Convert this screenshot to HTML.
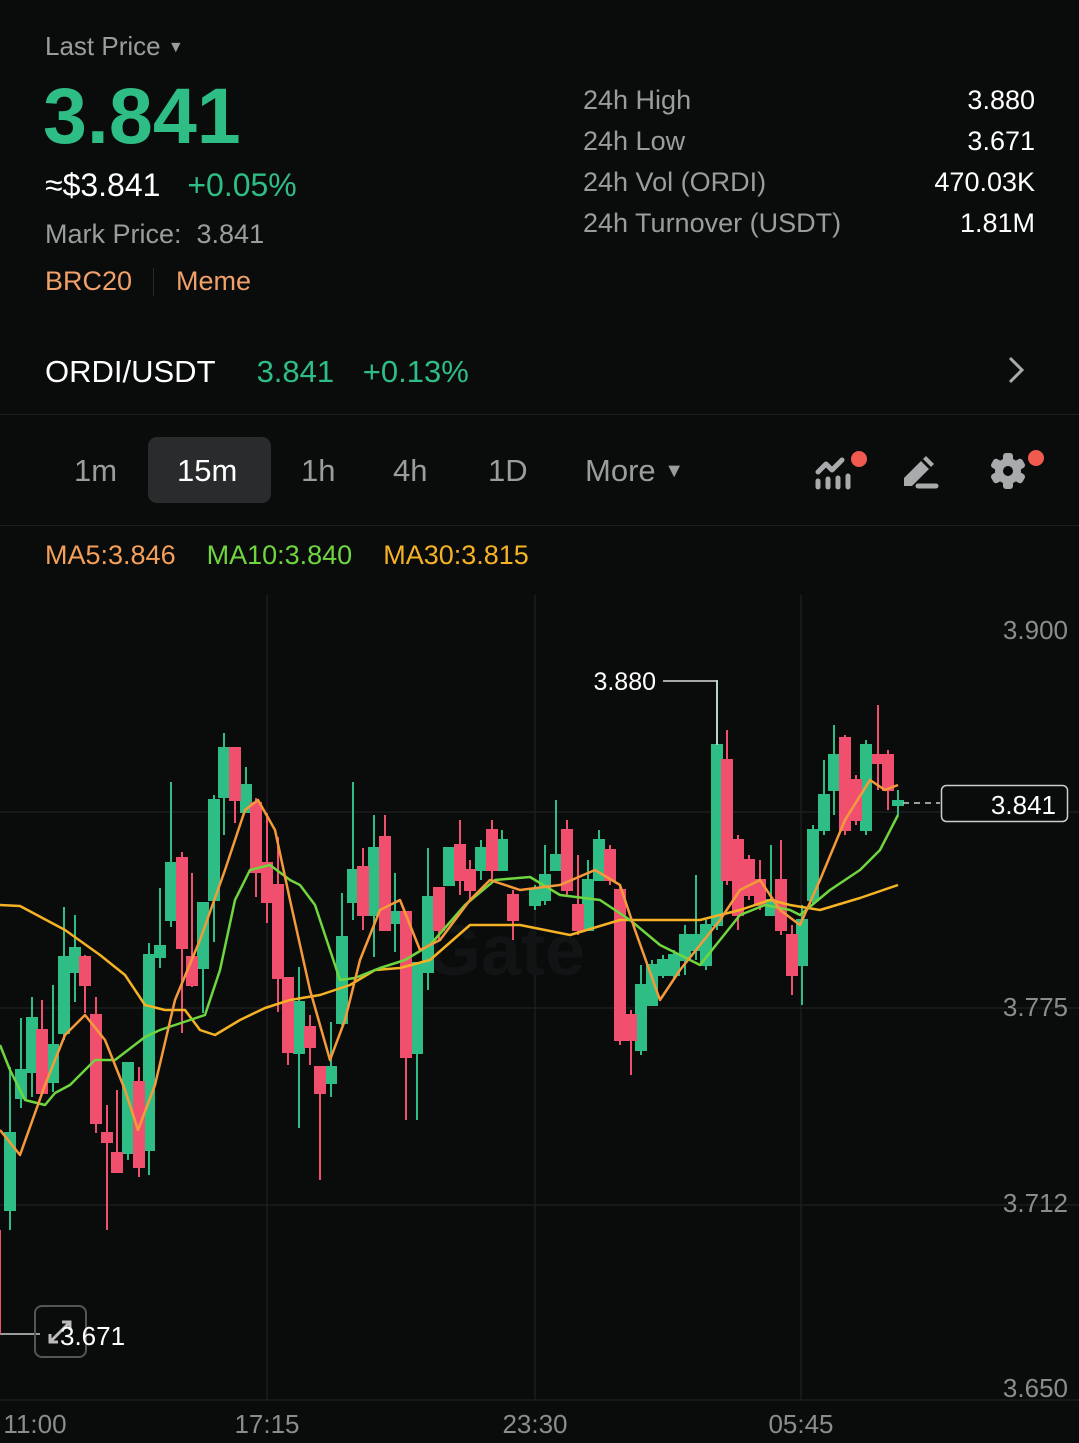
<!DOCTYPE html>
<html><head><meta charset="utf-8"><style>
*{margin:0;padding:0;box-sizing:border-box}
body{width:1079px;height:1443px;background:#0a0b0b;font-family:"Liberation Sans",sans-serif;position:relative;overflow:hidden;color:#fff}
.a{position:absolute;white-space:nowrap}
.g{color:#9a9c9e}
.gr{color:#2ebd85}
</style></head><body>
<div class="a g" style="left:45px;top:31px;font-size:26px">Last Price <span style="font-size:16px;position:relative;top:-3px">▼</span></div>
<div class="a gr" style="left:43px;top:70px;font-size:79px;font-weight:bold;letter-spacing:0px">3.841</div>
<div class="a" style="left:45px;top:167px;font-size:32px">≈$3.841 <span class="gr" style="margin-left:18px">+0.05%</span></div>
<div class="a g" style="left:45px;top:219px;font-size:27px">Mark Price:&nbsp; 3.841</div>
<div class="a" style="left:45px;top:266px;font-size:27px;color:#f0a06a">BRC20</div>
<div class="a" style="left:153px;top:268px;width:1px;height:28px;background:#2a2a2a"></div>
<div class="a" style="left:176px;top:266px;font-size:27px;color:#f0a06a">Meme</div>
<div class="a g" style="left:583px;top:80px;font-size:27px;line-height:41px">24h High<br>24h Low<br>24h Vol (ORDI)<br>24h Turnover (USDT)</div>
<div class="a" style="right:44px;top:80px;font-size:27px;line-height:41px;text-align:right">3.880<br>3.671<br>470.03K<br>1.81M</div>
<div class="a" style="left:45px;top:354px;font-size:31px">ORDI/USDT <span class="gr" style="margin-left:33px">3.841</span> <span class="gr" style="margin-left:20px">+0.13%</span></div>
<svg class="a" style="left:1006px;top:356px" width="20" height="28"><path d="M4 2 L16 14 L4 26" stroke="#aaa" stroke-width="3" fill="none"/></svg>
<div class="a" style="left:0;top:414px;width:1079px;height:1px;background:#1e1f20"></div>
<div class="a" style="left:148px;top:437px;width:123px;height:66px;background:#2a2b2c;border-radius:9px"></div>
<div class="a g" style="left:74px;top:453px;font-size:31px">1m</div>
<div class="a" style="left:177px;top:453px;font-size:31px">15m</div>
<div class="a g" style="left:301px;top:453px;font-size:31px">1h</div>
<div class="a g" style="left:393px;top:453px;font-size:31px">4h</div>
<div class="a g" style="left:488px;top:453px;font-size:31px">1D</div>
<div class="a g" style="left:585px;top:453px;font-size:31px">More <span style="font-size:20px;position:relative;top:-4px">▼</span></div>
<svg class="a" style="left:810px;top:448px" width="60" height="44">
<path d="M8 24 L16 16 L22 22 L32 12" stroke="#a8aaac" stroke-width="5" fill="none" stroke-linecap="round" stroke-linejoin="round"/>
<path d="M8 33V39M18 31V39M28 30V39M38 28V39" stroke="#a8aaac" stroke-width="5" stroke-linecap="round"/>
<circle cx="49" cy="11" r="8" fill="#f05a4f"/></svg>
<svg class="a" style="left:898px;top:450px" width="44" height="40">
<path d="M6 36 L6 28 L28 6 L36 14 L14 36Z" fill="#a8aaac"/><path d="M20 36 H38" stroke="#a8aaac" stroke-width="5" stroke-linecap="round"/><path d="M24 10 L32 18" stroke="#0a0b0b" stroke-width="3"/></svg>
<svg class="a" style="left:988px;top:446px" width="60" height="46">
<g transform="translate(20,25)" fill="#a8aaac"><circle r="13"/><rect x="-5" y="-18" width="10" height="36" rx="3"/><rect x="-5" y="-18" width="10" height="36" rx="3" transform="rotate(60)"/><rect x="-5" y="-18" width="10" height="36" rx="3" transform="rotate(120)"/><circle r="5" fill="#0a0b0b"/></g>
<circle cx="48" cy="12" r="8" fill="#f05a4f"/></svg>
<div class="a" style="left:0;top:525px;width:1079px;height:1px;background:#1e1f20"></div>
<div class="a" style="left:45px;top:540px;font-size:27px"><span style="color:#f5a05a">MA5:3.846</span><span style="color:#6fd640;margin-left:31px">MA10:3.840</span><span style="color:#f5b225;margin-left:31px">MA30:3.815</span></div>

<svg class="a" style="left:0;top:0" width="1079" height="1443">
<g stroke="#1c1d1e" stroke-width="1.5">
<path d="M267 595V1400M535 595V1400M801 595V1400M0 812H1079M0 1008H1079M0 1205H1079M0 1400H1079"/>
</g>
<text x="425" y="975" font-size="72" font-weight="bold" fill="#121314" font-family="Liberation Sans">Gate</text>
<g font-size="26" fill="#8a8c8e" font-family="Liberation Sans" text-anchor="end">
<text x="1068" y="639">3.900</text><text x="1068" y="1016">3.775</text><text x="1068" y="1212">3.712</text><text x="1068" y="1397">3.650</text></g>
<g font-size="26" fill="#8a8c8e" font-family="Liberation Sans" text-anchor="middle">
<text x="35" y="1433">11:00</text><text x="267" y="1433">17:15</text><text x="535" y="1433">23:30</text><text x="801" y="1433">05:45</text></g>
<g stroke-width="2">
<g stroke="#2ebd85" fill="#2ebd85">
<path d="M10 1067V1230M21 1018V1108M32 997V1097M53 985V1092M64 907V1040M75 915V1002M128 1063V1160M149 943V1175M160 888V968M171 782V927M203 903V1013M214 795V942M224 733V835M246 767V812M299 967V1128M331 1022V1097M342 893V1025M353 782V920M374 815V957M395 873V952M417 963V1120M428 848V990M449 848V885M481 840V880M502 830V870M535 885V910M545 845V905M556 800V870M588 860V930M599 830V880M641 965V1055M652 960V1005M663 955V978M674 950V978M685 925V975M696 875V960M706 920V970M717 680V930M771 845V915M802 905V1005M813 825V905M824 760V835M834 725V815M866 740V835M898 790V815"/>
<rect x="5" y="1133" width="10" height="77"/><rect x="16" y="1070" width="10" height="28"/><rect x="27" y="1018" width="10" height="54"/><rect x="48" y="1045" width="10" height="37"/><rect x="59" y="957" width="10" height="76"/><rect x="70" y="948" width="10" height="24"/><rect x="123" y="1063" width="10" height="90"/><rect x="144" y="955" width="10" height="195"/><rect x="155" y="946" width="10" height="11"/><rect x="166" y="863" width="10" height="57"/><rect x="198" y="903" width="10" height="65"/><rect x="209" y="800" width="10" height="100"/><rect x="219" y="748" width="10" height="49"/><rect x="241" y="785" width="10" height="27"/><rect x="294" y="1002" width="10" height="51"/><rect x="326" y="1067" width="10" height="16"/><rect x="337" y="937" width="10" height="86"/><rect x="348" y="870" width="10" height="32"/><rect x="369" y="848" width="10" height="67"/><rect x="390" y="912" width="10" height="11"/><rect x="412" y="963" width="10" height="90"/><rect x="423" y="897" width="10" height="75"/><rect x="444" y="848" width="10" height="37"/><rect x="476" y="848" width="10" height="22"/><rect x="497" y="840" width="10" height="30"/><rect x="530" y="890" width="10" height="15"/><rect x="540" y="875" width="10" height="25"/><rect x="551" y="855" width="10" height="15"/><rect x="583" y="880" width="10" height="50"/><rect x="594" y="840" width="10" height="40"/><rect x="636" y="985" width="10" height="65"/><rect x="647" y="965" width="10" height="40"/><rect x="658" y="960" width="10" height="15"/><rect x="669" y="955" width="10" height="20"/><rect x="680" y="935" width="10" height="25"/><rect x="691" y="935" width="10" height="15"/><rect x="701" y="925" width="10" height="40"/><rect x="712" y="745" width="10" height="180"/><rect x="766" y="900" width="10" height="15"/><rect x="797" y="920" width="10" height="45"/><rect x="808" y="830" width="10" height="70"/><rect x="819" y="795" width="10" height="35"/><rect x="829" y="755" width="10" height="35"/><rect x="861" y="745" width="10" height="85"/><rect x="893" y="801" width="10" height="4"/>
</g>
<g stroke="#f0506e" fill="#f0506e">
<path d="M42 1000V1095M85 955V1013M96 997V1133M107 1105V1230M117 1090V1172M139 1067V1177M182 852V1033M192 873V987M235 748V823M256 798V897M267 813V923M278 837V1012M288 978V1065M310 1015V1065M320 1067V1180M363 848V930M385 815V930M406 912V1120M439 888V940M460 820V895M470 860V900M492 820V880M513 890V940M567 820V895M578 855V935M610 845V885M620 885V1045M631 1010V1075M727 730V885M738 835V930M749 855V900M760 860V910M781 840V935M792 925V995M845 735V835M856 775V825M878 705V790M888 750V810"/>
<rect x="37" y="1030" width="10" height="63"/><rect x="80" y="957" width="10" height="28"/><rect x="91" y="1015" width="10" height="108"/><rect x="102" y="1133" width="10" height="9"/><rect x="112" y="1153" width="10" height="19"/><rect x="134" y="1082" width="10" height="85"/><rect x="177" y="858" width="10" height="90"/><rect x="187" y="957" width="10" height="28"/><rect x="230" y="748" width="10" height="52"/><rect x="251" y="803" width="10" height="69"/><rect x="262" y="863" width="10" height="39"/><rect x="273" y="885" width="10" height="93"/><rect x="283" y="978" width="10" height="74"/><rect x="305" y="1027" width="10" height="20"/><rect x="315" y="1067" width="10" height="26"/><rect x="358" y="867" width="10" height="48"/><rect x="380" y="837" width="10" height="93"/><rect x="401" y="912" width="10" height="145"/><rect x="434" y="888" width="10" height="42"/><rect x="455" y="845" width="10" height="35"/><rect x="465" y="870" width="10" height="20"/><rect x="487" y="830" width="10" height="40"/><rect x="508" y="895" width="10" height="25"/><rect x="562" y="830" width="10" height="60"/><rect x="573" y="905" width="10" height="25"/><rect x="605" y="850" width="10" height="30"/><rect x="615" y="890" width="10" height="150"/><rect x="626" y="1015" width="10" height="25"/><rect x="722" y="760" width="10" height="120"/><rect x="733" y="840" width="10" height="75"/><rect x="744" y="860" width="10" height="35"/><rect x="755" y="880" width="10" height="25"/><rect x="776" y="880" width="10" height="50"/><rect x="787" y="935" width="10" height="40"/><rect x="840" y="738" width="10" height="92"/><rect x="851" y="780" width="10" height="40"/><rect x="873" y="755" width="10" height="8"/><rect x="883" y="755" width="10" height="35"/>
</g></g>
<g fill="none" stroke-width="2.5" stroke-linejoin="round">
<polyline stroke="#f5b225" points="0,905 20,906 65,930 100,955 125,975 145,1005 165,1010 185,1010 200,1030 215,1035 240,1020 265,1008 290,1000 320,995 350,985 375,970 400,968 430,960 470,925 520,925 570,935 620,920 660,920 700,920 740,910 770,900 790,905 820,910 860,898 898,885"/>
<polyline stroke="#6fd640" points="0,1045 10,1070 25,1100 45,1105 55,1093 70,1085 85,1070 95,1060 115,1060 145,1037 160,1030 190,1020 205,1015 220,970 235,900 250,870 270,865 290,880 300,885 315,905 340,980 355,978 380,968 405,960 430,945 465,905 495,880 530,877 560,895 600,900 630,920 660,945 680,955 700,965 720,940 740,915 765,905 790,910 800,915 830,890 860,870 880,850 898,815"/>
<polyline stroke="#f59a3a" points="0,1130 20,1155 45,1085 65,1035 85,1015 105,1040 125,1090 138,1130 155,1085 175,1000 200,940 225,870 245,810 258,800 275,830 290,900 310,990 330,1060 345,1020 360,960 380,910 400,900 420,950 440,940 470,900 490,880 520,890 560,885 595,870 620,885 635,930 660,1000 680,970 700,945 720,920 740,890 760,880 780,910 800,925 820,880 845,820 870,780 885,790 898,785"/>
</g>
<path d="M663 681H717V745" stroke="#ddd" stroke-width="1.5" fill="none"/>
<text x="656" y="690" text-anchor="end" font-size="25" fill="#fff" font-family="Liberation Sans">3.880</text>
<path d="M903 803H940" stroke="#ccc" stroke-width="1.5" stroke-dasharray="6,5"/>
<rect x="941.5" y="785.5" width="126" height="36" rx="5" fill="#0a0b0b" stroke="#ccc" stroke-width="1.5"/>
<text x="1056" y="814" text-anchor="end" font-size="26" fill="#fff" font-family="Liberation Sans">3.841</text>
<path d="M0 1334H40" stroke="#ccc" stroke-width="1.5"/>
<path d="M0 1230V1334" stroke="#f0506e" stroke-width="2"/>
<rect x="35" y="1306" width="51" height="51" rx="7" fill="none" stroke="#555" stroke-width="2"/>
<path d="M50 1342L70 1322M62 1322H70V1330M50 1334V1342H58" stroke="#bbb" stroke-width="3" fill="none"/>
<text x="60" y="1345" font-size="26" fill="#fff" font-family="Liberation Sans">3.671</text>
</svg>
</body></html>
